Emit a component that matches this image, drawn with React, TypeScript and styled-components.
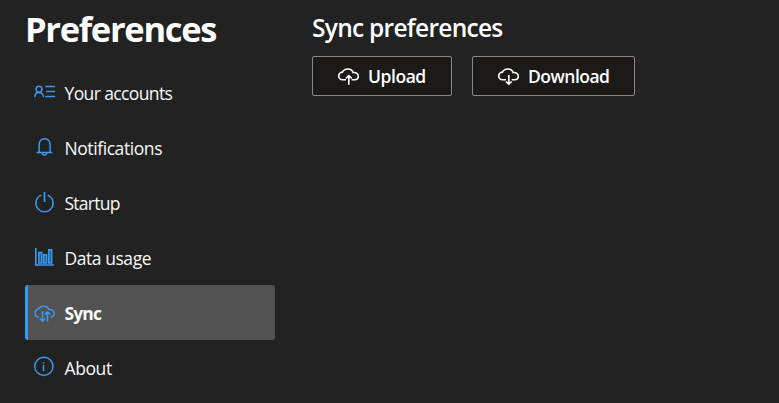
import React from "react";
import styled, { createGlobalStyle } from "styled-components";

const GlobalStyle = createGlobalStyle`
  html, body { margin: 0; background: #222222; }
  * { box-sizing: border-box; }
`;

const Page = styled.div`
  display: flex;
  align-items: flex-start;
  width: 779px;
  height: 403px;
  overflow: hidden;
  background: #222222;
  color: #ffffff;
  font-family: "Open Sans", "Noto Sans", sans-serif;
`;

const Sidebar = styled.aside`
  width: 250px;
  margin-left: 25px;
  flex: none;
`;

const Title = styled.h1`
  margin: 0;
  height: 65px;
  padding-top: 5px;
  font-size: 34.5px;
  line-height: 48px;
  font-weight: 700;
  letter-spacing: -1.3px;
  white-space: nowrap;
`;

const NavList = styled.nav`
  display: flex;
  flex-direction: column;
`;

const NavItem = styled.a<{ $active?: boolean }>`
  display: flex;
  align-items: center;
  height: 55px;
  padding-left: 6px;
  border-radius: 3px;
  border-left: 3px solid ${(p) => (p.$active ? "#2f9bff" : "transparent")};
  background: ${(p) => (p.$active ? "#525252" : "transparent")};
  color: #f8f8f8;
  font-size: 17.5px;
  line-height: 24px;
  font-weight: ${(p) => (p.$active ? 700 : 400)};
  cursor: pointer;
`;

const NavLabel = styled.span<{ $spacing: number }>`
  margin: 0 0 0 7.5px;
  letter-spacing: ${(p) => p.$spacing}px;
  white-space: nowrap;
`;

const NavIcon = styled.svg`
  display: block;
  flex: none;
  width: 23px;
  height: 23px;
  overflow: visible;
  fill: none;
  stroke: #3a9bf4;
  stroke-width: 1.45;
`;

const Content = styled.main`
  margin-left: 37px;
`;

const Heading = styled.h2`
  margin: 0;
  height: 56px;
  padding-top: 11px;
  font-size: 24.5px;
  line-height: 34px;
  font-weight: 600;
  letter-spacing: -0.72px;
  white-space: nowrap;
`;

const Actions = styled.div`
  display: flex;
  gap: 20px;
`;

const ActionButton = styled.button<{ $width: number }>`
  display: flex;
  align-items: center;
  width: ${(p) => p.$width}px;
  height: 40px;
  padding: 0 0 0 25px;
  border: 1px solid #8a8886;
  border-radius: 2px;
  background: #1b1a19;
  color: #ffffff;
  font-family: inherit;
  font-size: 17.5px;
  font-weight: 600;
  line-height: 24px;
`;

const ActionIcon = styled(NavIcon)`
  width: 22px;
  height: 20px;
  stroke: #ffffff;
  stroke-width: 1.6;
`;

const ActionLabel = styled.span<{ $spacing: number }>`
  margin: 0 0 1px 8px;
  letter-spacing: ${(p) => p.$spacing}px;
  white-space: nowrap;
`;

const icons = {
  accounts: (
    <>
      <circle cx="5" cy="8.2" r="2.9" />
      <path d="M.7 16.2C.9 13.2 2.6 11.4 5 11.4s4.200 1.800 4.400 4.800M11.300 5.500H21M12.300 10.500H21M11.300 15.500H21" />
    </>
  ),
  bell: (
    <path d="M5.200 16.500V8.200a5.450 5.450 0 0 1 10.900 0v8.300M2.500 16.500h15.800M8.200 16.800a2.300 2.300 0 0 0 4.600 0" />
  ),
  power: (
    <>
      <path d="M7.300 4.200a8.600 8.600 0 1 0 6.400 0" />
      <path d="M10.500 1v10" strokeWidth="1.700" />
    </>
  ),
  chart: (
    <>
      <path d="M1.800 2v17H20" strokeWidth="1.600" />
      <path
        d="M4.800 6.500h3v10.500h-3zM9.700 8.800h2.900V17H9.700zM14.700 3.800h3V17h-3z"
        fill="#285f92"
      />
    </>
  ),
  sync: (
    <path d="M5.100 16.200H4.400A4.200 4.200 0 0 1 4.200 8C5.500 5.900 7.600 4.900 10.100 5.200c2.200 0 4 1.300 4.800 3.200 3-.2 5.300 1.600 5.300 4 0 2-1.300 3.500-3.300 3.800M8.500 10v10.200M5.900 17.500l2.600 2.700 2.700-2.700M13.500 20.500V10.800M10.800 13.500l2.700-2.700 2.700 2.700" />
  ),
  info: (
    <>
      <circle cx="9.900" cy="10.400" r="9.100" />
      <path d="M9.500 6.200v1.500M9.500 9v6" strokeWidth="1.500" />
    </>
  ),
};

const cloud =
  "M8 13.700H4.600A3.800 3.800 0 0 1 4.400 6.100C5.400 4 7.500 3 9.900 3c2.500 0 4.500 1.300 5.200 3.500 3-.4 5.200 1.300 5.200 3.700 0 2.200-1.500 3.500-3.700 3.500h-3";

const items: {
  icon: keyof typeof icons;
  label: string;
  spacing: number;
  active?: boolean;
}[] = [
  { icon: "accounts", label: "Your accounts", spacing: -0.62 },
  { icon: "bell", label: "Notifications", spacing: -0.42 },
  { icon: "power", label: "Startup", spacing: -0.75 },
  { icon: "chart", label: "Data usage", spacing: -0.45 },
  { icon: "sync", label: "Sync", spacing: -0.9, active: true },
  { icon: "info", label: "About", spacing: -0.4 },
];

export default function App() {
  return (
    <>
      <GlobalStyle />
      <Page>
        <Sidebar>
          <Title>Preferences</Title>
          <NavList>
            {items.map((item) => (
              <NavItem key={item.label} $active={item.active}>
                <NavIcon viewBox="0 0 23 23">{icons[item.icon]}</NavIcon>
                <NavLabel $spacing={item.spacing}>{item.label}</NavLabel>
              </NavItem>
            ))}
          </NavList>
        </Sidebar>
        <Content>
          <Heading>Sync preferences</Heading>
          <Actions>
            <ActionButton $width={140}>
              <ActionIcon viewBox="0 0 22 20">
                <path d={cloud} />
                <path d="M10.800 18.800V9.800M7.900 12.300l2.900-2.700 2.900 2.700" />
              </ActionIcon>
              <ActionLabel $spacing={-0.45}>Upload</ActionLabel>
            </ActionButton>
            <ActionButton $width={163}>
              <ActionIcon viewBox="0 0 22 20">
                <path d={cloud} />
                <path d="M10.800 9v9M7.900 15.500l2.900 2.700 2.900-2.700" />
              </ActionIcon>
              <ActionLabel $spacing={-0.5}>Download</ActionLabel>
            </ActionButton>
          </Actions>
        </Content>
      </Page>
    </>
  );
}
